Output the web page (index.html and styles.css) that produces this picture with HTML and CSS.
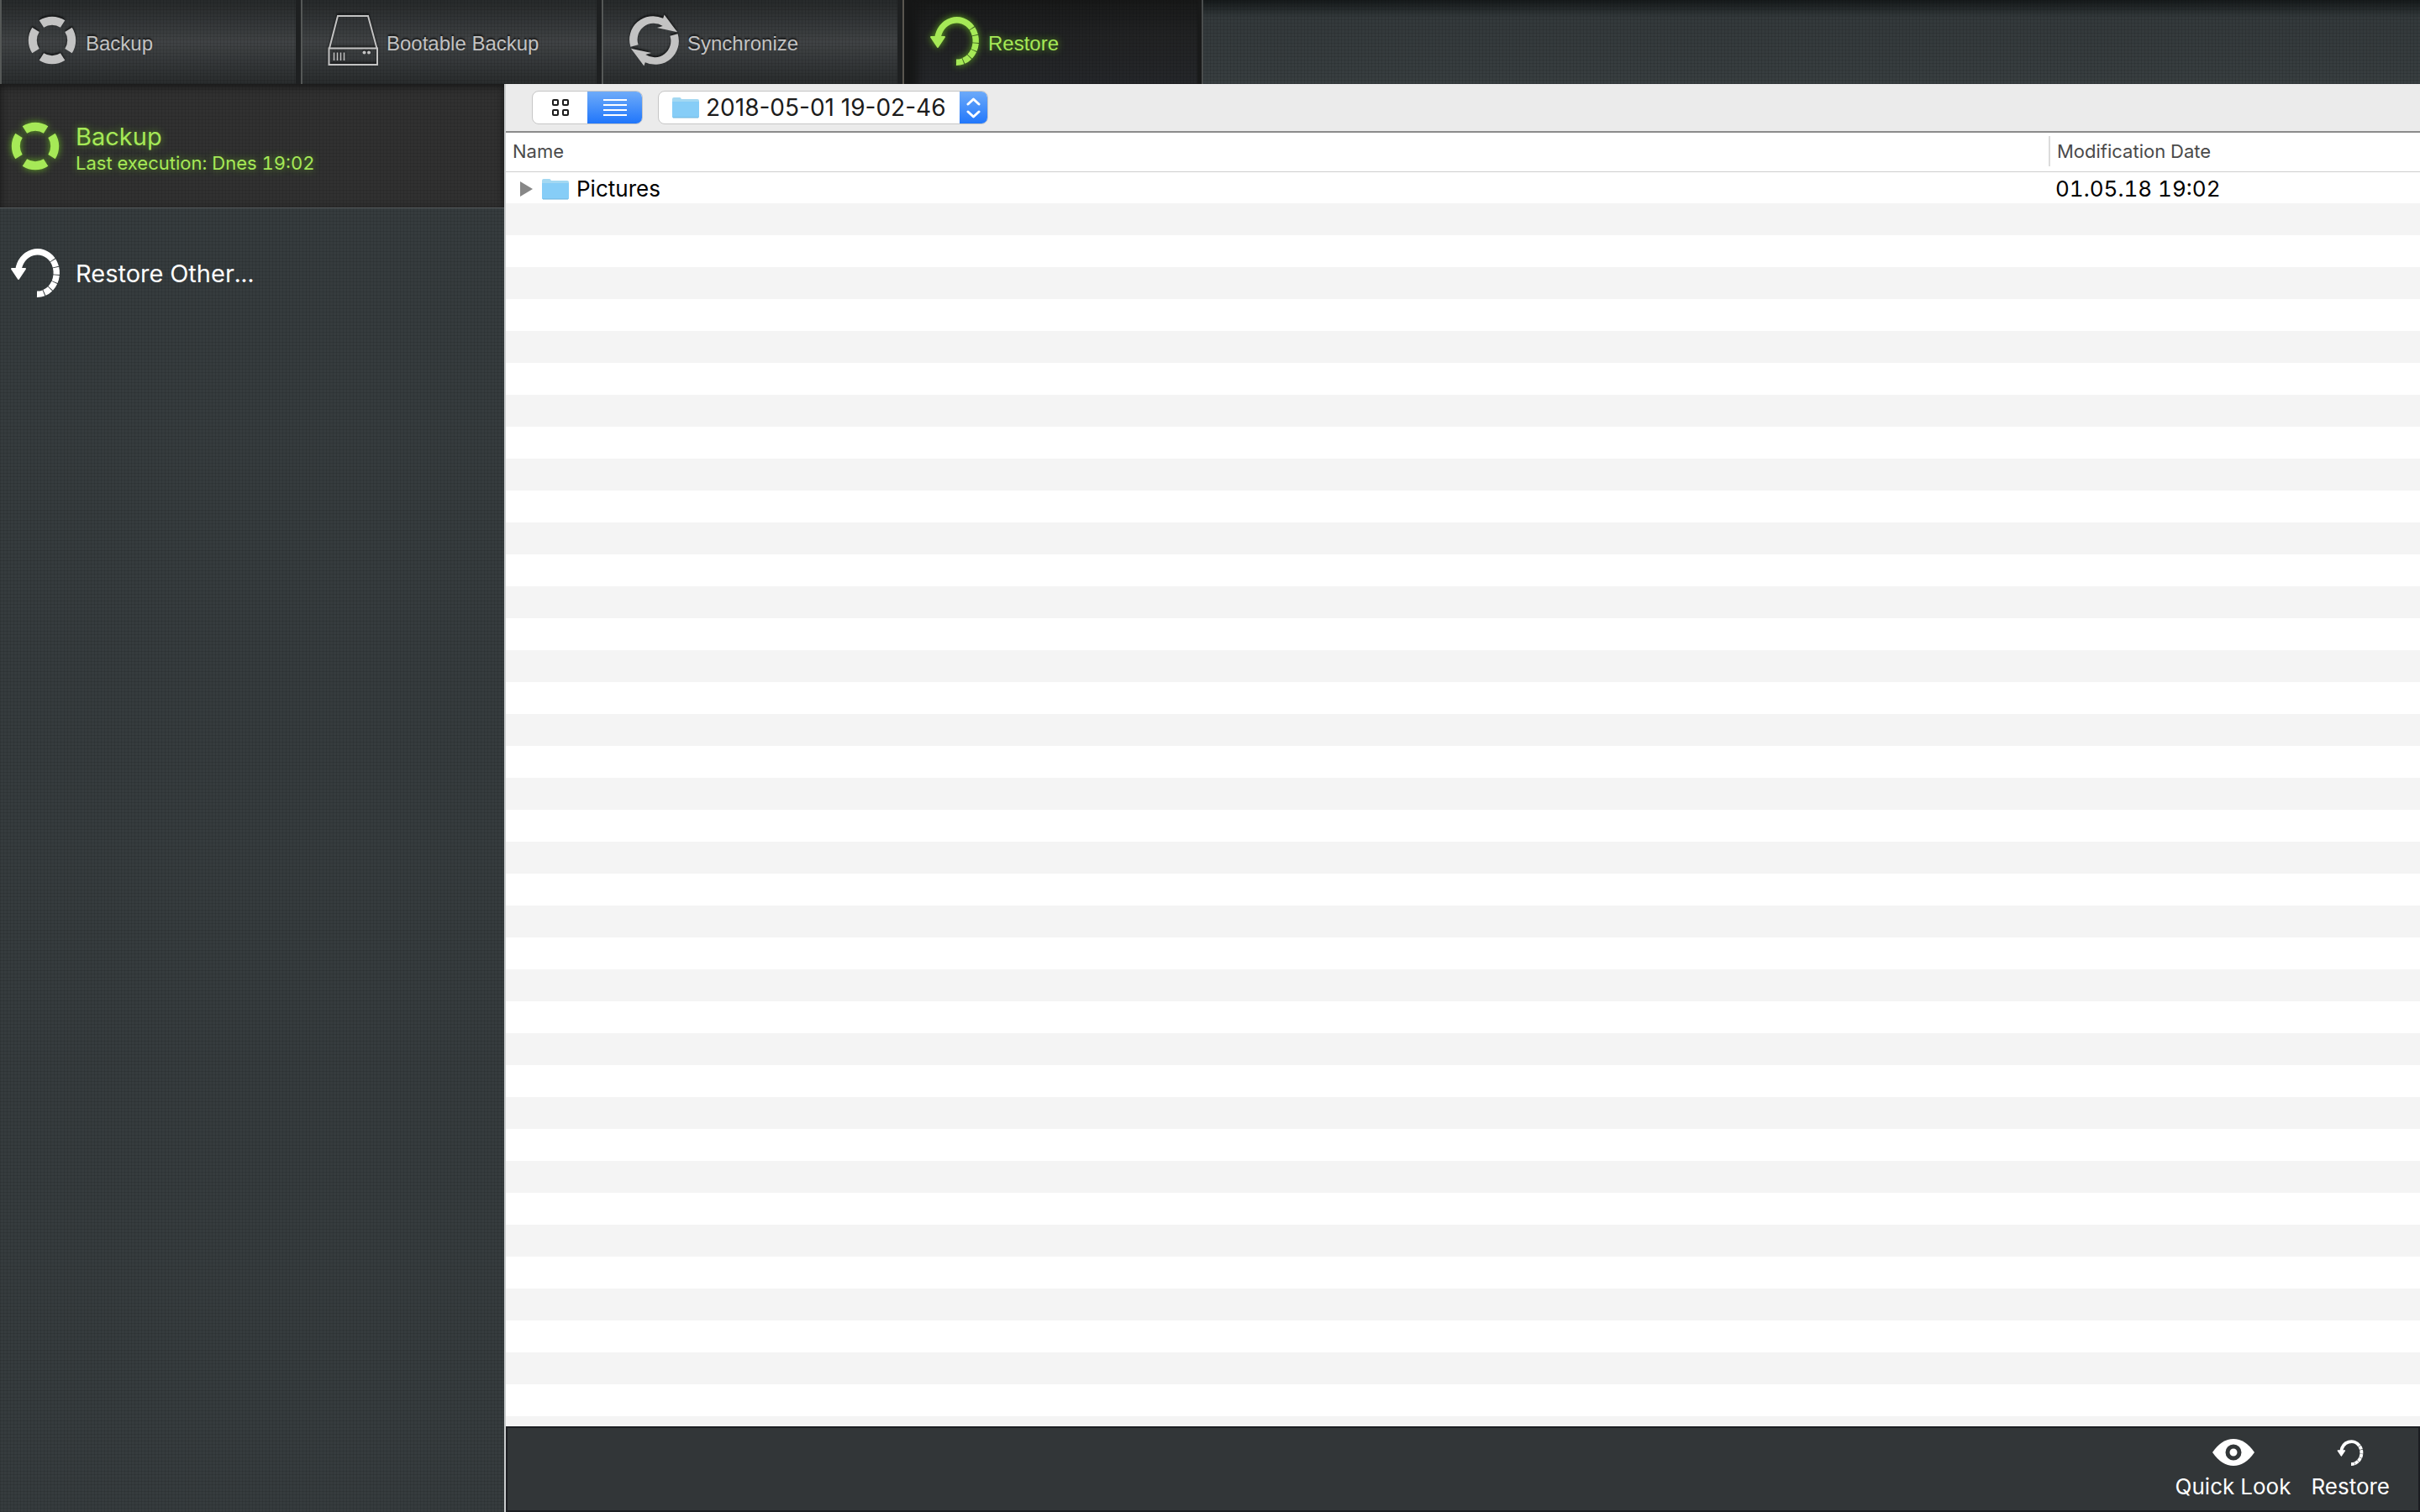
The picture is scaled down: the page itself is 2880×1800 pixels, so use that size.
FILE: index.html
```html
<!DOCTYPE html>
<html lang="en">
<head>
<meta charset="utf-8">
<title>Restore</title>
<link rel="stylesheet" href="styles.css">
</head>
<body>
<svg class="symbols" aria-hidden="true">
  <symbol id="ring" viewBox="0 0 60 60">
    <circle cx="30" cy="30" r="23.2" fill="none" stroke="currentColor" stroke-width="10" pathLength="360" stroke-dasharray="66 24" stroke-dashoffset="33"/>
  </symbol>
  <symbol id="restore" viewBox="0 0 60 60">
    <g fill="none" stroke="currentColor" stroke-width="7.4">
      <path d="M9.8 28A23 25.5 0 0 1 50.6 15.4"/>
      <path d="M50.6 15.4A23 25.5 0 0 1 32 56.3" pathLength="60" stroke-dasharray="9 1" stroke-dashoffset="-1"/>
    </g>
    <path d="M2 26H18L10 38Z" fill="currentColor" stroke="currentColor" stroke-width="2" stroke-linejoin="round"/>
  </symbol>
  <symbol id="drive" viewBox="0 0 60 62">
    <g fill="none" stroke="currentColor" stroke-width="2">
      <path d="M2 40.500L12 2H48L58.500 40.500"/>
      <path d="M1.500 40.500H59V60H1.500Z"/>
      <path d="M7.500 45.500V55M11.500 45.500V55M15.500 45.500V55M19.500 45.500V55" stroke-width="1.500"/>
    </g>
    <circle cx="43.500" cy="45.500" r="2" fill="currentColor"/>
    <circle cx="49" cy="45.500" r="2" fill="currentColor"/>
  </symbol>
  <symbol id="sync" viewBox="0 0 60 64">
    <path id="sync-half" fill="currentColor" d="M1.500 40A29 29 0 0 1 41.500 5L43 .5L59 22L34 16.500L41 14.500A20 20 0 0 0 11 37.500Z"/>
    <use href="#sync-half" transform="rotate(180 30.500 32)"/>
  </symbol>
  <symbol id="folder" viewBox="0 0 32 26">
    <path d="M0 3Q0 1 2 1H9Q10 1 11 3H30Q32 3 32 5V24Q32 25 31 25H1Q0 25 0 24Z" fill="#a3d8f2"/>
    <path d="M0 6H32V24Q32 25 31 25H1Q0 25 0 24Z" fill="#86cdf7"/>
    <path d="M1 25H31" stroke="#6fb3dc" stroke-width="1"/>
  </symbol>
</svg>

<nav class="tabs" aria-label="Mode">
  <button class="tab" type="button"><svg class="icon"><use href="#ring"/></svg><span class="tab-label">Backup</span></button>
  <button class="tab" type="button"><svg class="icon"><use href="#drive"/></svg><span class="tab-label">Bootable Backup</span></button>
  <button class="tab" type="button"><svg class="icon"><use href="#sync"/></svg><span class="tab-label">Synchronize</span></button>
  <button class="tab tab-active" type="button" aria-current="page"><svg class="icon"><use href="#restore"/></svg><span class="tab-label">Restore</span></button>
</nav>

<div class="workspace">
  <aside class="sidebar">
    <button class="source source-active" type="button">
      <svg class="icon"><use href="#ring"/></svg>
      <span class="source-text">
        <span class="source-name">Backup</span>
        <span class="source-note">Last execution: Dnes 19:02</span>
      </span>
    </button>
    <button class="source" type="button">
      <svg class="icon"><use href="#restore"/></svg>
      <span class="source-text"><span class="source-name">Restore Other...</span></span>
    </button>
  </aside>

  <main class="browser">
    <div class="toolbar">
      <div class="segments" role="group" aria-label="View">
        <button class="segment" type="button" aria-label="Icons" aria-pressed="false">
          <svg width="22" height="22" viewBox="0 0 22 22" fill="none" stroke="#1c1c1c" stroke-width="2"><rect x="2" y="2" width="6" height="6" rx="1"/><rect x="14" y="2" width="6" height="6" rx="1"/><rect x="2" y="14" width="6" height="6" rx="1"/><rect x="14" y="14" width="6" height="6" rx="1"/></svg>
        </button>
        <button class="segment segment-on" type="button" aria-label="List" aria-pressed="true">
          <svg width="28" height="22" viewBox="0 0 28 22" stroke="#fff" stroke-width="2"><path d="M0 2H28M0 8H28M0 14H28M0 20H28"/></svg>
        </button>
      </div>
      <div class="picker">
        <svg class="folder"><use href="#folder"/></svg>
        <select class="picker-select" aria-label="Backup date">
          <option>2018-05-01 19-02-46</option>
        </select>
        <span class="picker-arrows" aria-hidden="true">
          <svg width="17" height="26" viewBox="0 0 17 26" fill="none" stroke="#fff" stroke-width="3" stroke-linecap="round" stroke-linejoin="round"><path d="M2 9L8.500 3L15 9M2 18L8.500 24L15 18"/></svg>
        </span>
      </div>
    </div>

    <div class="listing">
      <table class="files">
        <thead>
          <tr><th scope="col">Name</th><th class="col-date" scope="col"><span class="divided">Modification Date</span></th></tr>
        </thead>
        <tbody>
          <tr>
            <td>
              <div class="file">
                <button class="disclosure" type="button" aria-label="Expand Pictures" aria-expanded="false"><svg width="15" height="18" viewBox="0 0 15 18"><path d="M0 0L15 9L0 18Z" fill="#878787"/></svg></button>
                <svg class="folder"><use href="#folder"/></svg>
                <span>Pictures</span>
              </div>
            </td>
            <td class="file-date">01.05.18 19:02</td>
          </tr>
        </tbody>
      </table>
    </div>

    <footer class="actions">
      <button class="action" type="button">
        <svg width="52" height="34" viewBox="0 0 52 34"><path d="M1 17Q12 1 26 1T51 17Q40 33 26 33T1 17Z" fill="#fff"/><circle cx="26" cy="17" r="7" fill="none" stroke="#323638" stroke-width="5"/></svg>
        Quick Look
      </button>
      <button class="action" type="button">
        <svg width="32" height="34" viewBox="0 -2 60 64"><use href="#restore" width="60" height="60"/></svg>
        Restore
      </button>
    </footer>
  </main>
</div>
</body>
</html>
```
FILE: styles.css
```css
:root {
  --ui: Inter, "Noto Sans", sans-serif;
  --slate: #323638;
  --green: #a6e957;
  --weave:
    repeating-linear-gradient(0deg, rgba(0, 0, 0, .1) 0 1px, transparent 1px 4px),
    repeating-linear-gradient(90deg, rgba(0, 0, 0, .1) 0 1px, transparent 1px 4px);
}

* { box-sizing: border-box; }

body {
  margin: 0;
  min-height: 100vh;
  display: flex;
  flex-direction: column;
  font-family: var(--ui);
  font-variant-numeric: tabular-nums;
  background: #343a3c;
}

button, select {
  font: inherit;
  font-variant-numeric: inherit;
  color: inherit;
  border: 0;
  margin: 0;
  padding: 0;
  background: none;
}

.symbols { position: absolute; width: 0; height: 0; }
.icon { width: 60px; height: 62px; flex: none; }

/* Mode tabs */
.tabs {
  display: flex;
  height: 100px;
  background: var(--weave), linear-gradient(#15191a, #33393b 20px, #383e40);
}

.tab {
  display: flex;
  align-items: center;
  gap: 10px;
  width: 358px;
  padding: 0 0 4px 30px;
  border-left: 2px solid #555857;
  border-right: 6px solid #1e2021;
  background: var(--weave), linear-gradient(#26292a, #404345 50%, #292c2d);
  color: #c3c3c3;
  font: 24px/32px "Liberation Sans", Arial, sans-serif;
  text-align: left;
  text-shadow: 0 -2px 2px rgba(0, 0, 0, .7);
}

.tab .icon { filter: drop-shadow(0 -2px 1px rgba(0, 0, 0, .6)); }
.tab-label { padding-top: 7px; }

.tab-active {
  border-left-color: #5a5650;
  border-right: 2px solid #4a4d4d;
  background: var(--weave), linear-gradient(#181919, #212223 40%, #25272a);
  box-shadow: inset 22px 0 10px -6px #161717, inset -5px 0 2px #191a1a;
  color: var(--green);
  text-shadow: 0 0 8px rgba(120, 220, 30, .7);
}

.tab-active .icon,
.source-active .icon { filter: drop-shadow(0 0 4px rgba(120, 220, 30, .7)); }

/* Sources */
.workspace { flex: 1; display: flex; }

.sidebar {
  flex: none;
  width: 602px;
  border-right: 2px solid #c9cccd;
  background: var(--weave), #363c3e;
}

.source {
  display: flex;
  align-items: center;
  gap: 18px;
  width: 100%;
  height: 152px;
  padding: 0 12px;
  color: #fff;
  text-align: left;
}

.source-active {
  height: 148px;
  border-bottom: 1px solid #565b5d;
  background: var(--weave), #313131;
  box-shadow: inset 0 3px 10px #161616;
  color: var(--green);
  text-shadow: 0 0 8px rgba(120, 220, 30, .6);
}

.source-text { display: flex; flex-direction: column; padding-top: 4px; }
.source-name { font-size: 29px; line-height: 36px; }
.source-note { font-size: 22px; line-height: 26px; }

/* File browser */
.browser { flex: 1; min-width: 0; display: flex; flex-direction: column; background: #fff; }

.toolbar {
  display: flex;
  align-items: center;
  gap: 18px;
  height: 58px;
  padding: 0 31px;
  border-bottom: 2px solid #8b8b8b;
  background: #ebebeb;
}

.segments, .picker {
  display: flex;
  height: 40px;
  border: 1px solid #c6c6c6;
  border-radius: 8px;
  background: #fff;
  overflow: hidden;
}

.segment { display: flex; align-items: center; justify-content: center; width: 65px; }

.segment-on, .picker-arrows { background: linear-gradient(#6eabf9, #2076fb); }

.folder { flex: none; width: 32px; height: 26px; }

.picker { align-items: center; padding-left: 16px; }
.picker-select {
  appearance: none;
  width: 310px;
  height: 38px;
  padding-left: 8px;
  color: #1c1c1c;
  font-size: 28px;
  font-variant-numeric: normal;
}
.picker-arrows { display: flex; align-items: center; justify-content: center; width: 33px; height: 40px; }

.listing {
  flex: 1;
  background: repeating-linear-gradient(#fff 0 38px, #f4f4f4 38px 76px) 0 46px;
}

.files { width: 100%; border-collapse: collapse; table-layout: fixed; }
.files th {
  height: 46px;
  padding: 0 8px 2px;
  border-bottom: 1px solid #cfcfcf;
  background: #fff;
  color: #4a4a4a;
  font-size: 22px;
  font-weight: 400;
  text-align: left;
}
.files .col-date { width: 442px; padding: 0 0 2px; }
.divided { display: block; padding-left: 8px; border-left: 2px solid #dcdcdc; line-height: 36px; }
.files td { height: 38px; padding: 2px 0 0; color: #000; font-size: 26px; line-height: 36px; }
.files .file-date { padding-left: 8px; }

.file { display: flex; align-items: center; gap: 9px; padding-left: 17px; }
.disclosure { display: flex; width: 17px; }

/* Bottom actions */
.actions {
  display: flex;
  justify-content: flex-end;
  gap: 24px;
  height: 102px;
  padding: 12px 34px 0;
  border: 2px solid #1b1d21;
  background: var(--slate);
}

.action {
  display: flex;
  flex-direction: column;
  align-items: center;
  gap: 8px;
  color: #fff;
  font-size: 26px;
  line-height: 32px;
}
```
